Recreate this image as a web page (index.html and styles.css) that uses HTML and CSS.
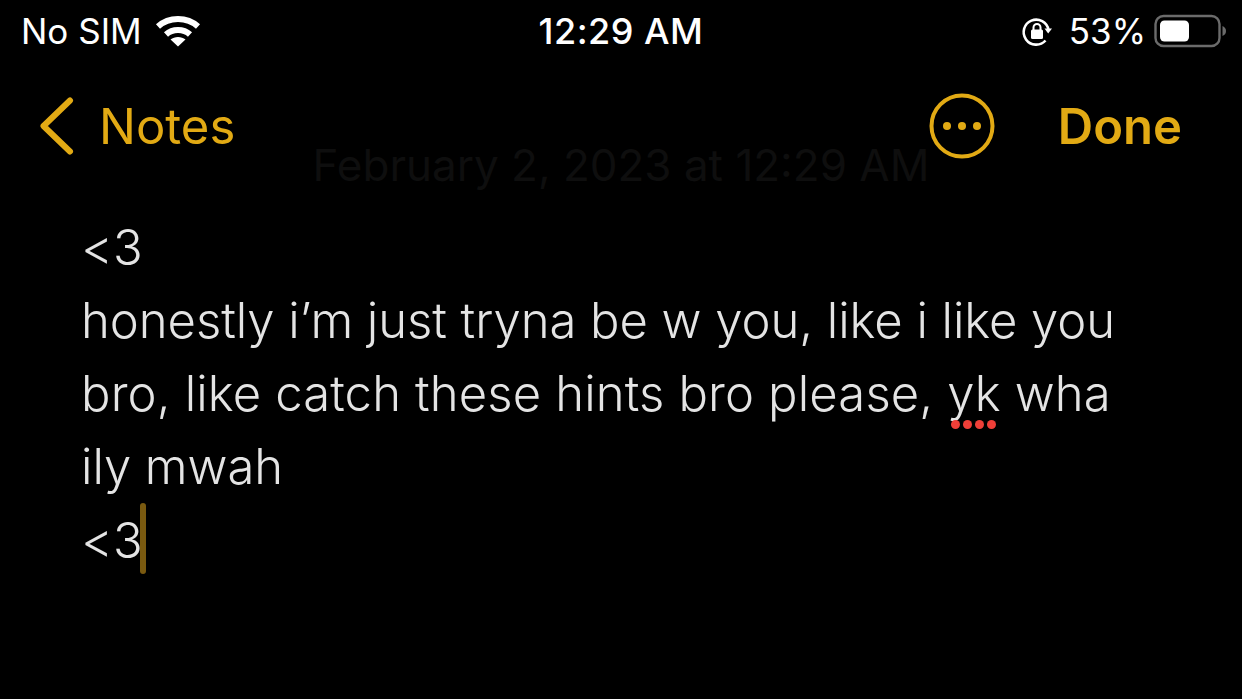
FILE: index.html

```html
<!DOCTYPE html>
<html lang="en">
<head>
    <meta charset="UTF-8">
    <meta name="viewport" content="width=device-width, initial-scale=1.0">
    <title>Notes</title>
    <link rel="stylesheet" href="styles.css">
</head>
<body>
    <header class="status">
        <div class="status-left">
            <span>No SIM</span>
            <svg class="wifi" width="46" height="34" viewBox="0 0 46 34">
                <path fill="none" stroke="#fff" stroke-width="6" d="M3 12.5 C14 2.5 32 2.5 43 12.5"/>
                <path fill="none" stroke="#fff" stroke-width="6" d="M11 20.5 C17.5 14.5 28.5 14.5 35 20.5"/>
                <path fill="#fff" d="M23 32.5 L15.5 25.5 C19.5 22 26.5 22 30.5 25.5 Z"/>
            </svg>
        </div>
        <div class="status-time">12:29 AM</div>
        <div class="status-right">
            <svg class="lock" width="32" height="32" viewBox="0 0 32 32">
                <path fill="none" stroke="#fff" stroke-width="2.6" d="M27.5 15 A12.5 12.5 0 1 0 24.5 25.5"/>
                <path fill="#fff" d="M23.5 13.5 H31 L27.2 18.5 Z"/>
                <rect x="10" y="14.5" width="12" height="9.5" rx="1.5" fill="#fff"/>
                <path fill="none" stroke="#fff" stroke-width="2" d="M12.5 15 V12.5 A3.5 3.5 0 0 1 19.5 12.5 V15"/>
            </svg>
            <span class="percent">53%</span>
            <svg class="battery" width="72" height="34" viewBox="0 0 72 34">
                <rect x="1.5" y="2" width="64" height="30" rx="8" fill="none" stroke="#6b6b6b" stroke-width="2.4"/>
                <rect x="6" y="6.5" width="29" height="21" rx="4.5" fill="#fff"/>
                <path fill="#6b6b6b" d="M68.5 12 C71 13 72 15 72 17 C72 19 71 21 68.5 22 Z"/>
            </svg>
        </div>
    </header>

    <nav class="toolbar">
        <a class="back">
            <svg width="36" height="58" viewBox="0 0 36 58">
                <path fill="none" stroke="#e2aa14" stroke-width="6" stroke-linecap="round" stroke-linejoin="round" d="M31 3.5 L4.5 29 L31 54.5"/>
            </svg>
            <span>Notes</span>
        </a>
        <div class="actions">
            <svg class="more" width="66" height="66" viewBox="0 0 66 66">
                <circle cx="33" cy="33" r="30.5" fill="none" stroke="#e2aa14" stroke-width="4"/>
                <circle cx="18" cy="33" r="4" fill="#e2aa14"/>
                <circle cx="33" cy="33" r="4" fill="#e2aa14"/>
                <circle cx="48" cy="33" r="4" fill="#e2aa14"/>
            </svg>
            <a class="done">Done</a>
        </div>
    </nav>

    <div class="date">February 2, 2023 at 12:29 AM</div>

    <main class="note">
        <p>&lt;3</p>
        <p>honestly i’m just tryna be w you, like i like you</p>
        <p class="wide">bro, like catch these hints bro please, <span class="typo">yk<span class="dots"><i></i><i></i><i></i><i></i></span></span> wha</p>
        <p>ily mwah</p>
        <p>&lt;3<span class="caret"></span></p>
    </main>
</body>
</html>
```

FILE: styles.css

```css
html, body {
    height: 100%;
}

body {
    margin: 0;
    background-color: #000;
    color: #fff;
    font-family: Inter, 'Noto Sans', sans-serif;
    overflow: hidden;
    position: relative;
}

.status {
    display: grid;
    grid-template-columns: 1fr auto 1fr;
    align-items: center;
    height: 62px;
    padding: 0 16px;
    font-size: 35px;
}

.status-left {
    display: flex;
    align-items: center;
    gap: 13px;
    padding-left: 5px;
}

.status-time {
    font-weight: 500;
    font-size: 36px;
    letter-spacing: 0.5px;
}

.status-right {
    display: flex;
    align-items: center;
    justify-content: flex-end;
}

.percent {
    margin: 0 8px 0 16px;
}

.toolbar {
    display: flex;
    justify-content: space-between;
    align-items: center;
    height: 66px;
    margin-top: 31px;
    padding: 0 60px 0 39px;
    color: #e2aa14;
    font-size: 49px;
}

.back {
    display: flex;
    align-items: center;
    gap: 24px;
}

.actions {
    display: flex;
    align-items: center;
    gap: 63px;
}

.done {
    font-weight: 600;
}

.date {
    position: absolute;
    top: 138px;
    left: 0;
    right: 0;
    text-align: center;
    color: #0e0e0e;
    font-size: 44px;
}

.note {
    padding: 52px 0 0 81px;
    color: #e4e4e4;
    font-size: 49px;
    line-height: 73px;
    font-weight: 350;
    letter-spacing: -0.05px;
}

.note p {
    margin: 0;
    white-space: nowrap;
}

.note p.wide {
    letter-spacing: 0.14px;
}

.typo {
    position: relative;
}

.dots {
    position: absolute;
    left: 4px;
    bottom: -6px;
    display: flex;
    gap: 3px;
    line-height: 0;
}

.dots i {
    width: 9px;
    height: 9px;
    border-radius: 50%;
    background-color: #ef3f38;
}

.caret {
    display: inline-block;
    width: 6px;
    height: 71px;
    margin-left: -3px;
    vertical-align: -16px;
    border-radius: 3px;
    background-color: #7a5a10;
}
```
